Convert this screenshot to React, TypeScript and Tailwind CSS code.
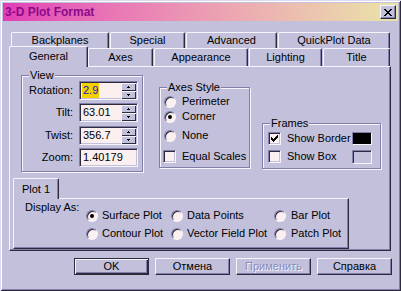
import React from "react";

const X_PATTERN = [
  "xx....xx",
  ".xx..xx.",
  "..xxxx..",
  "...xx...",
  "..xxxx..",
  ".xx..xx.",
  "xx....xx",
];

const CHECK_PATTERN = [
  "......x",
  ".....xx",
  "x...xxx",
  "xx.xxx.",
  "xxxxx..",
  ".xxx...",
  "..x....",
];

function PixelIcon({ pattern, w, h }: { pattern: string[]; w: number; h: number }) {
  const rects: React.ReactElement[] = [];
  pattern.forEach((row, y) => {
    row.split("").forEach((c, x) => {
      if (c === "x") rects.push(<rect key={`${x}-${y}`} x={x} y={y} width={1} height={1} fill="#000" />);
    });
  });
  return (
    <svg width={w} height={h} viewBox={`0 0 ${w} ${h}`} shapeRendering="crispEdges">
      {rects}
    </svg>
  );
}

function Tab({ label, className }: { label: string; className: string }) {
  return (
    <div
      className={`flex items-center justify-center bg-[#c3c0dc] border-l border-t border-r border-l-[#f6f4fc] border-t-[#f6f4fc] border-r-[#2c2a3c] rounded-tl-[2px] rounded-tr-[2px] shadow-[inset_-1px_0_0_#827eaa] whitespace-nowrap ${className}`}
    >
      {label}
    </div>
  );
}

function Group({ label, className, children }: { label: string; className: string; children: React.ReactNode }) {
  return (
    <div className={`relative border border-[#827eaa] shadow-[inset_1px_1px_0_#f6f4fc,1px_1px_0_#f6f4fc] ${className}`}>
      <span className="absolute -top-[7px] left-[7px] px-[1px] leading-[13px] bg-[#c3c0dc] whitespace-nowrap">{label}</span>
      {children}
    </div>
  );
}

function Radio({ checked }: { checked?: boolean }) {
  return (
    <span className="w-[12px] h-[12px] shrink-0 rounded-full bg-[#fbefef] border border-t-[#827eaa] border-l-[#827eaa] border-r-[#f6f4fc] border-b-[#f6f4fc] shadow-[inset_1px_1px_0_#2c2a3c] flex items-center justify-center">
      {checked && <span className="w-[4px] h-[4px] rounded-full bg-black" />}
    </span>
  );
}

function Check({ checked }: { checked?: boolean }) {
  return (
    <span className="w-[13px] h-[13px] shrink-0 bg-[#fbefef] border border-t-[#827eaa] border-l-[#827eaa] border-r-[#f6f4fc] border-b-[#f6f4fc] shadow-[inset_1px_1px_0_#2c2a3c,inset_-1px_-1px_0_#c3c0dc] flex items-center justify-center">
      {checked && <PixelIcon pattern={CHECK_PATTERN} w={7} h={7} />}
    </span>
  );
}

function SpinBtn({ up }: { up?: boolean }) {
  return (
    <div className="h-[8px] flex items-center justify-center bg-[#c3c0dc] shadow-[inset_1px_1px_0_#f6f4fc,inset_-1px_-1px_0_#2c2a3c]">
      <svg width="3" height="2" viewBox="0 0 3 2" shapeRendering="crispEdges">
        {up ? (
          <>
            <rect x="1" y="0" width="1" height="1" fill="#000" />
            <rect x="0" y="1" width="3" height="1" fill="#000" />
          </>
        ) : (
          <>
            <rect x="0" y="0" width="3" height="1" fill="#000" />
            <rect x="1" y="1" width="1" height="1" fill="#000" />
          </>
        )}
      </svg>
    </div>
  );
}

function Field({ label, value, spin, selected, className }: { label: string; value: string; spin?: boolean; selected?: boolean; className?: string }) {
  return (
    <div className={`flex items-center h-[19px] ${className ?? ""}`}>
      <span className="w-[51px] mr-[6px] text-right whitespace-nowrap">{label}</span>
      <div className="w-[59px] h-[19px] flex bg-[#fbefef] border border-t-[#827eaa] border-l-[#827eaa] border-r-[#f6f4fc] border-b-[#f6f4fc] shadow-[inset_1px_1px_0_#2c2a3c,inset_-1px_-1px_0_#c3c0dc]">
        <div className="flex-1 pl-[2px] flex items-center">
          {selected ? (
            <span className="bg-[#f4d000] text-[#1010c8] leading-[15px] px-[1px]">{value}</span>
          ) : (
            <span className="leading-[15px] px-[1px]">{value}</span>
          )}
        </div>
        {spin && (
          <div className="w-[15px] mt-[1px] mr-[1px] flex flex-col">
            <SpinBtn up />
            <SpinBtn />
          </div>
        )}
      </div>
    </div>
  );
}

function Btn({ children, def, disabled }: { children: React.ReactNode; def?: boolean; disabled?: boolean }) {
  if (def) {
    return (
      <div className="w-[75px] h-[17px] flex items-center justify-center bg-[#c3c0dc] border border-[#2c2a3c] shadow-[inset_1px_1px_0_#f6f4fc,inset_-1px_-1px_0_#2c2a3c,inset_-2px_-2px_0_#827eaa]">
        {children}
      </div>
    );
  }
  return (
    <div
      className={`w-[75px] h-[17px] flex items-center justify-center bg-[#c3c0dc] border border-t-[#f6f4fc] border-l-[#f6f4fc] border-r-[#2c2a3c] border-b-[#2c2a3c] shadow-[inset_-1px_-1px_0_#827eaa] ${
        disabled ? "text-[#8e8ab2] [text-shadow:1px_1px_0_#f6f4fc]" : ""
      }`}
    >
      {children}
    </div>
  );
}

export default function App() {
  return (
    <div className="w-[401px] h-[291px] bg-[#c3c0dc] font-['Liberation_Sans',Arial,sans-serif] text-[11px] text-black shadow-[inset_1px_1px_0_#dcdaee,inset_-1px_-1px_0_#2c2a3c,inset_2px_2px_0_#ffffff,inset_-2px_-2px_0_#827eaa] overflow-hidden">
      {/* Title bar */}
      <div className="pt-[3px] px-[3px]">
        <div className="h-[18px] flex items-center justify-between bg-linear-to-r from-[#e23cb5] to-[#e9e4a8] pl-[2px] pr-[2px]">
          <span className="font-bold text-[12px] text-[#8a0a8c] leading-[14px]">3-D Plot Format</span>
          <div className="w-[16px] h-[14px] flex items-center justify-center bg-[#c3c0dc] border border-t-[#f6f4fc] border-l-[#f6f4fc] border-r-[#2c2a3c] border-b-[#2c2a3c] shadow-[inset_-1px_-1px_0_#827eaa]">
            <PixelIcon pattern={X_PATTERN} w={8} h={7} />
          </div>
        </div>
      </div>

      {/* Tabs row 1 */}
      <div className="mt-[11px] pl-[11px] flex h-[16px]">
        <Tab label="Backplanes" className="w-[98px] h-[16px] mr-[1px]" />
        <Tab label="Special" className="w-[75px] h-[16px] mr-[1px]" />
        <Tab label="Advanced" className="w-[91px] h-[16px] mr-[1px]" />
        <Tab label="QuickPlot Data" className="w-[112px] h-[16px]" />
      </div>

      {/* Tabs row 2 */}
      <div className="pl-[9px] flex items-end h-[18px]">
        <Tab label="General" className="relative z-10 w-[79px] h-[21px] -mb-[1px] pb-[1px]" />
        <Tab label="Axes" className="w-[65px] h-[18px] mr-[1px]" />
        <Tab label="Appearance" className="w-[94px] h-[18px] mr-[1px]" />
        <Tab label="Lighting" className="w-[73px] h-[18px] mr-[1px]" />
        <Tab label="Title" className="w-[67px] h-[18px]" />
      </div>

      {/* Panel */}
      <div className="ml-[9px] w-[382px] h-[185px] border border-t-[#f6f4fc] border-l-[#f6f4fc] border-r-[#2c2a3c] border-b-[#2c2a3c] shadow-[inset_-1px_-1px_0_#827eaa]">
        <div className="flex items-start pl-[11px]">
          <Group label="View" className="mt-[8px] w-[122px] h-[97px] pt-[5px]">
            <Field label="Rotation:" value="2.9" spin selected />
            <Field label="Tilt:" value="63.01" spin className="mt-[3px]" />
            <Field label="Twist:" value="356.7" spin className="mt-[4px]" />
            <Field label="Zoom:" value="1.40179" className="mt-[3px]" />
          </Group>

          <Group label="Axes Style" className="ml-[16px] mt-[20px] w-[91px] h-[81px] pl-[4px] pt-[7px]">
            <div className="flex items-center h-[13px] gap-[6px]">
              <Radio />
              <span className="whitespace-nowrap">Perimeter</span>
            </div>
            <div className="flex items-center h-[13px] gap-[6px] mt-[2px]">
              <Radio checked />
              <span className="whitespace-nowrap">Corner</span>
            </div>
            <div className="flex items-center h-[13px] gap-[6px] mt-[6px]">
              <Radio />
              <span className="whitespace-nowrap">None</span>
            </div>
            <div className="flex items-center h-[13px] gap-[6px] mt-[8px] -ml-[1px]">
              <Check />
              <span className="whitespace-nowrap">Equal Scales</span>
            </div>
          </Group>

          <Group label="Frames" className="ml-[12px] mt-[56px] w-[119px] h-[46px] pl-[5px] pr-[8px] pt-[8px]">
            <div className="flex items-center h-[13px]">
              <Check checked />
              <span className="ml-[6px] whitespace-nowrap">Show Border</span>
              <span className="ml-auto w-[20px] h-[13px] bg-black border border-t-[#827eaa] border-l-[#827eaa] border-r-[#f6f4fc] border-b-[#f6f4fc]" />
            </div>
            <div className="flex items-center h-[13px] mt-[5px]">
              <Check />
              <span className="ml-[6px] whitespace-nowrap">Show Box</span>
              <span className="ml-auto w-[20px] h-[14px] bg-[#c3c0dc] border border-t-[#827eaa] border-l-[#827eaa] border-r-[#f6f4fc] border-b-[#f6f4fc] shadow-[inset_1px_1px_0_#2c2a3c]" />
            </div>
          </Group>
        </div>

        {/* Plot 1 sub-tab */}
        <div className="mt-[6px] ml-[3px]">
          <Tab label="Plot 1" className="relative z-10 w-[46px] h-[21px] -mb-[1px]" />
          <div className="w-[336px] h-[51px] border border-t-[#f6f4fc] border-l-[#f6f4fc] border-r-[#2c2a3c] border-b-[#2c2a3c] shadow-[inset_-1px_-1px_0_#827eaa] flex items-start pl-[11px] pt-[2px]">
            <span className="w-[61px] leading-[13px] whitespace-nowrap">Display As:</span>
            <div className="mt-[8px] grid grid-cols-[85px_103px_auto] gap-y-[5px]">
              <div className="flex items-center h-[13px] gap-[4px]"><Radio checked /><span className="whitespace-nowrap">Surface Plot</span></div>
              <div className="flex items-center h-[13px] gap-[4px]"><Radio /><span className="whitespace-nowrap">Data Points</span></div>
              <div className="flex items-center h-[13px] gap-[5px]"><Radio /><span className="whitespace-nowrap">Bar Plot</span></div>
              <div className="flex items-center h-[13px] gap-[4px]"><Radio /><span className="whitespace-nowrap">Contour Plot</span></div>
              <div className="flex items-center h-[13px] gap-[4px]"><Radio /><span className="whitespace-nowrap">Vector Field Plot</span></div>
              <div className="flex items-center h-[13px] gap-[5px]"><Radio /><span className="whitespace-nowrap">Patch Plot</span></div>
            </div>
          </div>
        </div>
      </div>

      {/* Buttons */}
      <div className="mt-[7px] pl-[74px] flex gap-[6px]">
        <Btn def>OK</Btn>
        <Btn>Отмена</Btn>
        <Btn disabled>Применить</Btn>
        <Btn>Справка</Btn>
      </div>
    </div>
  );
}
